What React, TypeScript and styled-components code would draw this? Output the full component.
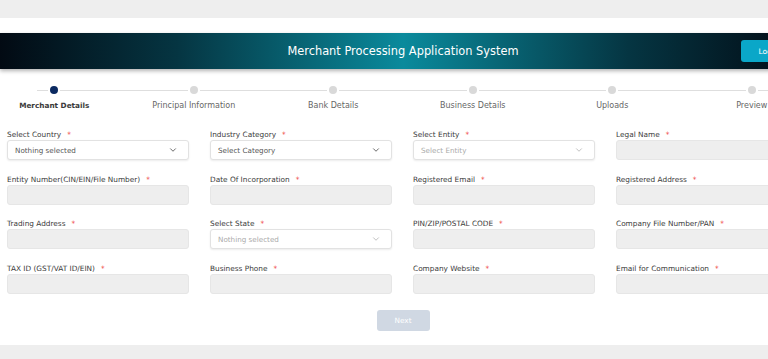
import styled, { createGlobalStyle } from 'styled-components';
import { ChevronDown } from 'lucide-react';

const GlobalStyles = createGlobalStyle`
  html, body {
    margin: 0;
    padding: 0;
    overflow: hidden;
    background: #ffffff;
  }
  body {
    font-family: 'DejaVu Sans', 'Open Sans', sans-serif;
    color: #333;
  }
`;

const Page = styled.div`
  width: 806px;
  display: flex;
  flex-direction: column;
`;

const TopBar = styled.div`
  height: 18px;
  background: #eeeeee;
`;

const Header = styled.header`
  margin-top: 15px;
  height: 36px;
  display: flex;
  align-items: center;
  justify-content: center;
  position: relative;
  background: linear-gradient(
    90deg,
    #020a13 0%,
    #053542 22%,
    #0a8a9c 50%,
    #053542 78%,
    #020a13 100%
  );
  box-shadow: 0 2px 4px rgba(0, 0, 0, 0.3);
`;

const Title = styled.h1`
  margin: 0;
  font-size: 11.4px;
  font-weight: 400;
  color: #ffffff;
`;

const LoginButton = styled.button`
  position: absolute;
  right: 10px;
  top: 7px;
  height: 22px;
  width: 55px;
  border: none;
  border-radius: 3px;
  background: #0aa7c8;
  color: #fff;
  font-family: inherit;
  font-size: 7.5px;
`;

const Stepper = styled.div`
  margin: 17px -15.5px 0;
  display: grid;
  grid-template-columns: repeat(6, 139.5px);
`;

const Step = styled.div`
  display: flex;
  flex-direction: column;
  align-items: center;
`;

const Track = styled.div`
  width: 100%;
  height: 8px;
  display: flex;
  align-items: center;
`;

const LineHalf = styled.div<{ $stub?: 'left' | 'right' }>`
  flex: 1;
  display: flex;
  justify-content: ${(p) => (p.$stub === 'left' ? 'flex-end' : 'flex-start')};
  &::before {
    content: '';
    display: block;
    height: 1px;
    width: ${(p) => (p.$stub ? '11px' : '100%')};
    background: #dedede;
  }
`;

const Dot = styled.span<{ $active?: boolean }>`
  width: 8px;
  height: 8px;
  border-radius: 50%;
  margin: 0 2px;
  background: ${(p) => (p.$active ? '#0b2a61' : '#d9d9d9')};
`;

const StepLabel = styled.span<{ $active?: boolean }>`
  margin-top: 6px;
  font-size: ${(p) => (p.$active ? '7.3px' : '8px')};
  line-height: 11px;
  font-weight: ${(p) => (p.$active ? 700 : 400)};
  color: ${(p) => (p.$active ? '#3a3a3a' : '#666')};
`;

const Form = styled.div`
  margin-top: 18px;
  padding: 0 8px 0 7px;
  display: grid;
  grid-template-columns: repeat(4, 182px);
  column-gap: 21px;
  row-gap: 13.5px;
`;

const Field = styled.div`
  display: flex;
  flex-direction: column;
`;

const Label = styled.label`
  font-size: 7.35px;
  color: #3a3a3a;
  line-height: 11px;
`;

const Req = styled.span`
  color: #e33;
  margin-left: 6px;
`;

const Select = styled.div<{ $muted?: boolean }>`
  height: 20px;
  box-sizing: border-box;
  border: 1px solid #e2e2e2;
  border-radius: 3px;
  background: #fff;
  box-shadow: 0 1px 2px rgba(0, 0, 0, 0.08);
  display: flex;
  align-items: center;
  justify-content: space-between;
  padding: 0 10px 0 7px;
  font-size: 7.2px;
  color: ${(p) => (p.$muted ? '#aaa' : '#555')};
  svg {
    color: ${(p) => (p.$muted ? '#aaa' : '#333')};
  }
`;

const Input = styled.div`
  height: 20px;
  box-sizing: border-box;
  border: 1px solid #e6e6e6;
  border-radius: 3px;
  background: #eeeeee;
`;

const Actions = styled.div`
  margin-top: 16px;
  display: flex;
  justify-content: center;
`;

const NextButton = styled.button`
  width: 53px;
  height: 21px;
  border: none;
  border-radius: 3px;
  background: #d0d8e3;
  color: #fff;
  font-family: inherit;
  font-size: 7.3px;
`;

const Footer = styled.div`
  margin-top: 14px;
  height: 20px;
  background: #eeeeee;
`;

const steps = [
  'Merchant Details',
  'Principal Information',
  'Bank Details',
  'Business Details',
  'Uploads',
  'Preview',
];

type FieldDef = { label: string; kind: 'input' | 'select'; placeholder?: string; muted?: boolean };

const fields: FieldDef[] = [
  { label: 'Select Country', kind: 'select', placeholder: 'Nothing selected' },
  { label: 'Industry Category', kind: 'select', placeholder: 'Select Category' },
  { label: 'Select Entity', kind: 'select', placeholder: 'Select Entity', muted: true },
  { label: 'Legal Name', kind: 'input' },
  { label: 'Entity Number(CIN/EIN/File Number)', kind: 'input' },
  { label: 'Date Of Incorporation', kind: 'input' },
  { label: 'Registered Email', kind: 'input' },
  { label: 'Registered Address', kind: 'input' },
  { label: 'Trading Address', kind: 'input' },
  { label: 'Select State', kind: 'select', placeholder: 'Nothing selected', muted: true },
  { label: 'PIN/ZIP/POSTAL CODE', kind: 'input' },
  { label: 'Company File Number/PAN', kind: 'input' },
  { label: 'TAX ID (GST/VAT ID/EIN)', kind: 'input' },
  { label: 'Business Phone', kind: 'input' },
  { label: 'Company Website', kind: 'input' },
  { label: 'Email for Communication', kind: 'input' },
];

export default function App() {
  return (
    <>
      <GlobalStyles />
      <TopBar />
      <Page>
        <Header>
          <Title>Merchant Processing Application System</Title>
          <LoginButton type="button">Login</LoginButton>
        </Header>

        <Stepper>
          {steps.map((s, i) => (
            <Step key={s}>
              <Track>
                <LineHalf $stub={i === 0 ? 'left' : undefined} />
                <Dot $active={i === 0} />
                <LineHalf $stub={i === steps.length - 1 ? 'right' : undefined} />
              </Track>
              <StepLabel $active={i === 0}>{s}</StepLabel>
            </Step>
          ))}
        </Stepper>

        <Form>
          {fields.map((f) => (
            <Field key={f.label}>
              <Label>
                {f.label}
                <Req>*</Req>
              </Label>
              {f.kind === 'select' ? (
                <Select $muted={f.muted}>
                  <span>{f.placeholder}</span>
                  <ChevronDown size={10} strokeWidth={1.75} />
                </Select>
              ) : (
                <Input />
              )}
            </Field>
          ))}
        </Form>

        <Actions>
          <NextButton type="button">Next</NextButton>
        </Actions>
      </Page>
      <Footer />
    </>
  );
}
